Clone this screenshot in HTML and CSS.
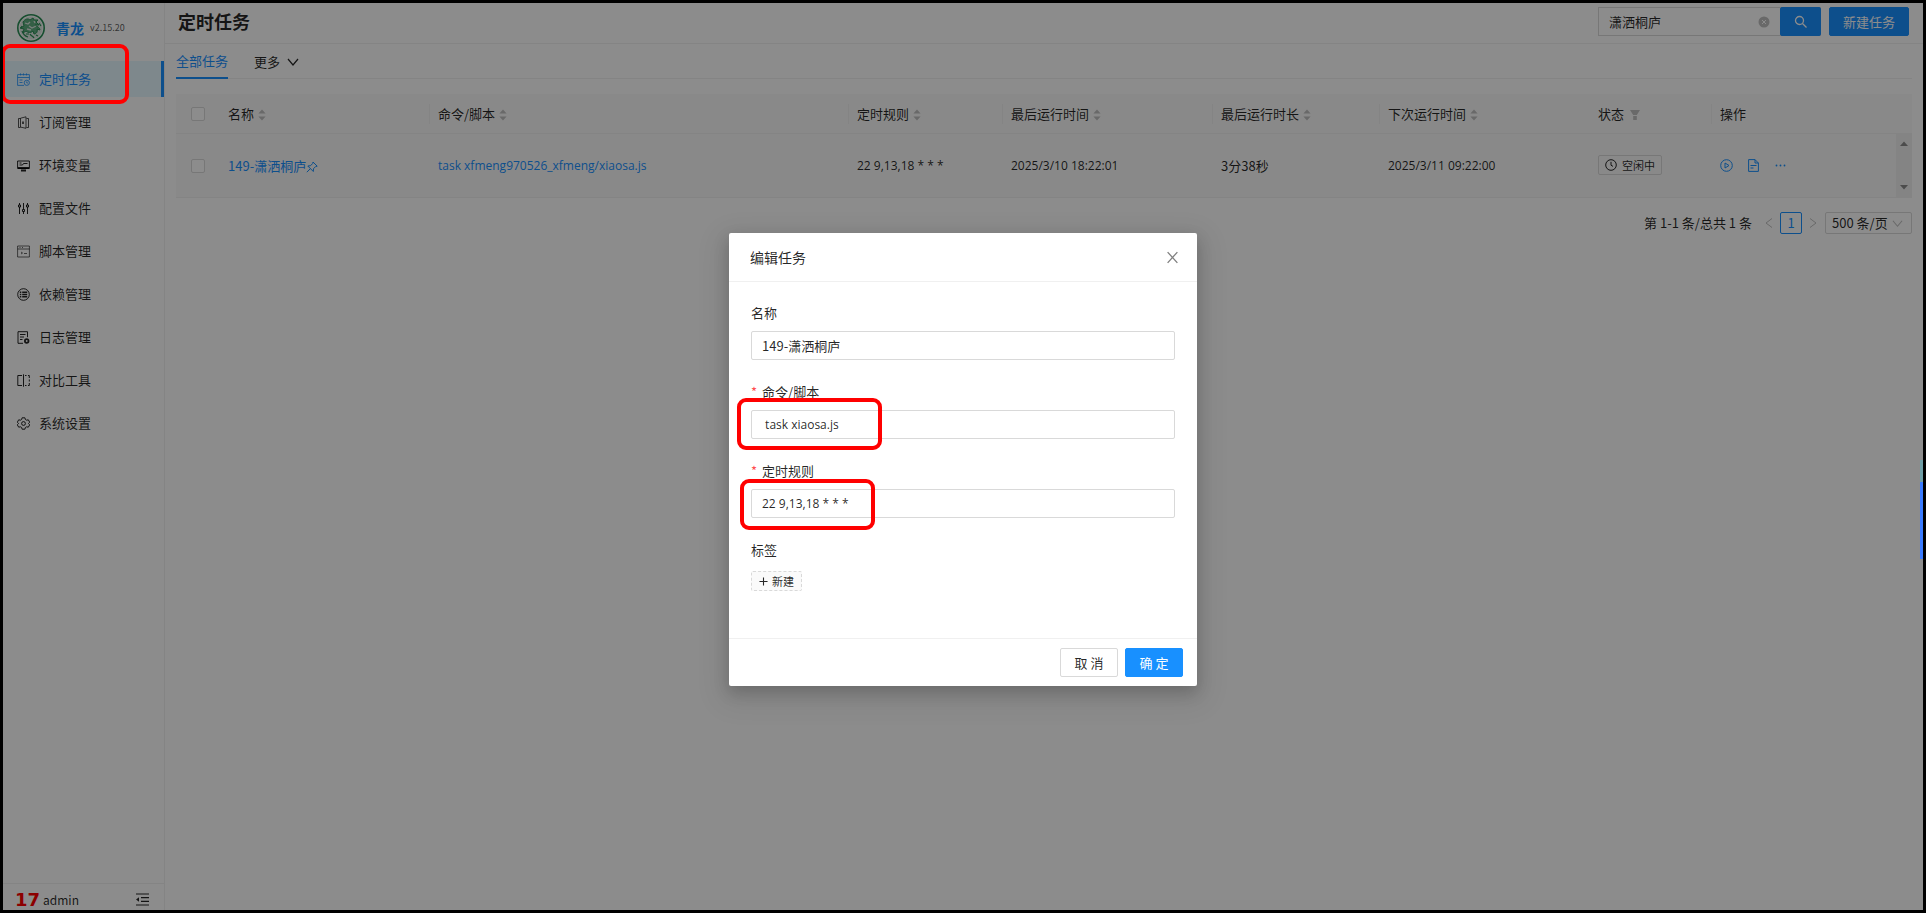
FILE: index.html
```html
<!DOCTYPE html>
<html lang="zh-CN">
<head>
<meta charset="utf-8">
<title>定时任务 - 青龙</title>
<link rel="stylesheet" href="styles.css">
</head>
<body>
<svg class="defs" width="0" height="0" aria-hidden="true">
  <symbol id="sorter" viewBox="0 0 8 14"><path fill="currentColor" d="M4 1.5 7.6 5.5H.4zM4 12.5 .4 8.5h7.2z"/></symbol>
  <symbol id="down" viewBox="0 0 12 12"><path fill="none" stroke="currentColor" stroke-width="1.2" d="M1 3l5 6 5-6"/></symbol>
</svg>
<div class="app">
  <aside class="sider">
    <div class="brand">
      <svg class="logo" viewBox="0 0 28 28" fill="none" stroke="#2b8f57">
        <circle cx="14" cy="14" r="13.2" stroke-width="1.600"/>
        <circle cx="14" cy="14" r="11.500" fill="#dfe9e2" stroke="none"/>
        <path fill="#5fae80" stroke-width="1" d="M6 8c2-3 5-4 7-2l3-2 1 2 4 0-2 2 3 3-4 0c2 2 5 2 5 5l-3-1c1 3-1 5-3 5l-1-3c-2 2-5 2-7 0l-3 2 1-4-4-1 4-2z"/>
        <path stroke="#dfe9e2" stroke-width="1.300" d="M8 9l3 1 2-2M12 12l3 2 4-2M10 15l4 1M17 7l1 2"/>
        <path stroke-width="1.200" d="M5 17c1 3 3 5 6 6M13 20c1 2 3 2 4 4M19 21l2 1M5 12l-1 2M22 9l2 3M9 20l3 0"/>
      </svg>
      <a class="brand-name" href="#">青龙</a>
      <span class="version">v2.15.20</span>
    </div>
    <nav>
      <ul class="menu">
        <li><a class="menu-item active" href="#"><svg viewBox="0 0 13 13" fill="none" stroke="currentColor" stroke-width=".8"><path d="M12.4 7V1.6H.6v10.8H7M.6 4.5h11.8M3.5.4v2M6.5.4v2M9.5.4v2M2.5 7h3M2.5 9.5h3"/><circle cx="9.8" cy="9.8" r="2.6"/><path d="M9.8 8.4v1.6h1"/></svg>定时任务</a></li>
        <li><a class="menu-item" href="#"><svg viewBox="0 0 13 13" fill="none" stroke="currentColor" stroke-width=".8"><path d="M3.500 11.500H1.500v-9h2M3.500 2.200 9 .8v11.500l-5.500-1.200zM9.500 2.500h2v9h-2"/><path stroke-width="1.500" d="M6 5.500v2.500"/></svg>订阅管理</a></li>
        <li><a class="menu-item" href="#"><svg viewBox="0 0 13 13" fill="none" stroke="currentColor"><path d="M.6 2h11.800v7.500H.6zM2.500 6h3l1-1.500h4M2.500 4h2"/><path stroke-width="1.800" d="M1 9h11M4 11.500h5"/></svg>环境变量</a></li>
        <li><a class="menu-item" href="#"><svg viewBox="0 0 13 13" fill="none" stroke="currentColor"><path d="M2.500 1v2M2.500 5v7M6.500 1v6M6.500 9.500v2.500M10.500 1v2M10.500 5v7M1.500 3h2v2h-2zM5.500 7.500h2v2h-2zM9.500 3h2v2h-2z"/></svg>配置文件</a></li>
        <li><a class="menu-item" href="#"><svg viewBox="0 0 13 13" fill="none" stroke="currentColor" stroke-width=".7"><path d="M.6 1h11.800v11H.6zM.6 4h11.800M2.500 2.500h1M5 2.500h1M4 7l1.500 1L4 9M7 8.500h3"/></svg>脚本管理</a></li>
        <li><a class="menu-item" href="#"><svg viewBox="0 0 13 13" fill="none" stroke="currentColor"><circle cx="6.500" cy="6.500" r="5.800"/><path stroke-width="1.500" d="M2.800 4.200h1.500M5.200 4.200h5M2.800 6.500h1.500M5.200 6.500h5M2.800 8.800h1.500M5.200 8.800h5"/></svg>依赖管理</a></li>
        <li><a class="menu-item" href="#"><svg viewBox="0 0 13 13" fill="none" stroke="currentColor"><path d="M6 12.300H1V.7h9.500v5.500M3 3.500h5.500M3 6h4M3 8.500h2.500"/><circle cx="9.700" cy="10" r="1.800" stroke-width="1.800"/></svg>日志管理</a></li>
        <li><a class="menu-item" href="#"><svg viewBox="0 0 13 13" fill="none" stroke="currentColor"><path d="M5 1.500H.8v10H5M6.500.3v12.400M8 1.500h1.500M11 1.500h1.300V4M12.300 5.500v2M12.300 9v2.500H11M9.500 11.500H8"/></svg>对比工具</a></li>
        <li><a class="menu-item" href="#"><svg viewBox="0 0 13 13" fill="none" stroke="currentColor" stroke-linejoin="round"><path d="M5.100.8h2.800l.5 1.700 1.200.7 1.700-.4 1.400 2.400-1.200 1.300 1.200 1.300-1.400 2.400-1.700-.4-1.200.7-.5 1.700H5.100l-.5-1.700-1.200-.7-1.700.4L.3 7.800l1.200-1.300L.3 5.200l1.400-2.400 1.700.4 1.200-.7z"/><circle cx="6.500" cy="6.500" r="1.900"/></svg>系统设置</a></li>
      </ul>
    </nav>
    <div class="sider-foot">
      <span class="badge-num">17</span>
      <span class="user">admin</span>
      <button class="icon-btn fold" aria-label="收起菜单"><svg viewBox="0 0 13 13" fill="none" stroke="currentColor" stroke-width="1.200"><path d="M0 1h13M5 4.700h8M5 8.300h8M0 12h13"/><path fill="currentColor" stroke="none" d="M0 6.500 3 4.200v4.600z"/></svg></button>
    </div>
  </aside>

  <main class="main">
    <header class="page-head">
      <h1>定时任务</h1>
      <div class="search">
        <input type="text" value="潇洒桐庐" aria-label="搜索任务">
        <button class="icon-btn clear" aria-label="清除"><svg viewBox="0 0 12 12"><circle cx="6" cy="6" r="5.500" fill="currentColor"/><path stroke="#fff" d="M4 4l4 4M8 4 4 8"/></svg></button>
        <button class="btn primary search-btn" aria-label="搜索"><svg viewBox="0 0 13 13" fill="none" stroke="currentColor" stroke-width="1.300"><circle cx="5.500" cy="5.500" r="4"/><path d="M8.500 8.500l4 4"/></svg></button>
      </div>
      <button class="btn primary new-btn">新建任务</button>
    </header>

    <div class="content">
      <div class="tabs">
        <a class="tab active" href="#">全部任务</a>
        <button class="tab">更多<svg viewBox="0 0 12 12"><use href="#down"/></svg></button>
      </div>

      <table class="tasks">
        <colgroup><col class="c-check"><col class="c-long"><col><col class="c-rule"><col class="c-long"><col class="c-dur"><col class="c-long"><col class="c-state"><col class="c-ops"><col class="c-bar"></colgroup>
        <thead>
          <tr>
            <th><input type="checkbox" aria-label="全选"></th>
            <th class="split">名称<svg class="sorter"><use href="#sorter"/></svg></th>
            <th class="split">命令/脚本<svg class="sorter"><use href="#sorter"/></svg></th>
            <th class="split">定时规则<svg class="sorter"><use href="#sorter"/></svg></th>
            <th class="split">最后运行时间<svg class="sorter"><use href="#sorter"/></svg></th>
            <th class="split">最后运行时长<svg class="sorter"><use href="#sorter"/></svg></th>
            <th>下次运行时间<svg class="sorter"><use href="#sorter"/></svg></th>
            <th class="split">状态<svg class="filter" viewBox="0 0 10 10"><path fill="currentColor" d="M0 0h10L6.800 5H3.200zM3.200 6h3.600v4H3.200z"/></svg></th>
            <th>操作</th>
            <th></th>
          </tr>
        </thead>
        <tbody>
          <tr>
            <td><input type="checkbox" aria-label="选择 149-潇洒桐庐"></td>
            <td><a href="#">149-潇洒桐庐<svg class="pin" viewBox="0 0 12 12" fill="none" stroke="currentColor"><path d="M7 1l4.200 4.200-1.500.3-2.200 2.200-.2 2.800L1.800 5l2.700-.3L6.700 2.500zM4.200 7.800.8 11.200"/></svg></a></td>
            <td class="latin"><a href="#">task xfmeng970526_xfmeng/xiaosa.js</a></td>
            <td class="latin">22 9,13,18 * * *</td>
            <td class="latin">2025/3/10 18:22:01</td>
            <td>3分38秒</td>
            <td class="latin">2025/3/11 09:22:00</td>
            <td><span class="tag"><svg viewBox="0 0 12 12" fill="none" stroke="currentColor"><circle cx="6" cy="6" r="5.300"/><path d="M6 2.800v3.400l2 1.200"/></svg>空闲中</span></td>
            <td>
              <div class="ops">
                <button class="icon-btn" aria-label="运行"><svg viewBox="0 0 13 13" fill="none" stroke="currentColor"><circle cx="6.500" cy="6.500" r="5.800"/><path d="M5 4l4 2.500L5 9z"/></svg></button>
                <button class="icon-btn" aria-label="日志"><svg viewBox="0 0 13 13" fill="none" stroke="currentColor"><path d="M1.600.6h6.400l3.400 3.400v8.400H1.600zM8 .6V4h3.400M3.500 6.500h6M3.500 9h3"/></svg></button>
                <button class="icon-btn" aria-label="更多操作"><svg viewBox="0 0 13 13" fill="currentColor"><circle cx="2.500" cy="6.500" r=".9"/><circle cx="6.500" cy="6.500" r=".9"/><circle cx="10.500" cy="6.500" r=".9"/></svg></button>
              </div>
            </td>
            <td class="bar-cell"><div class="scrollbar"><svg viewBox="0 0 8 5"><path fill="currentColor" d="M0 5l4-4.500L8 5z"/></svg><svg viewBox="0 0 8 5"><path fill="currentColor" d="M0 0h8L4 4.500z"/></svg></div></td>
          </tr>
        </tbody>
      </table>

      <div class="pager">
        <span class="total">第 1-1 条/总共 1 条</span>
        <button class="icon-btn arrow" aria-label="上一页"><svg viewBox="0 0 12 12" fill="none" stroke="currentColor"><path d="M9 1.500 3 6l6 4.500"/></svg></button>
        <button class="page-no">1</button>
        <button class="icon-btn arrow" aria-label="下一页"><svg viewBox="0 0 12 12" fill="none" stroke="currentColor"><path d="M3 1.500 9 6l-6 4.500"/></svg></button>
        <div class="size">
          <select aria-label="每页条数"><option>500 条/页</option></select>
          <svg viewBox="0 0 12 12"><use href="#down"/></svg>
        </div>
      </div>
    </div>
  </main>

  <div class="mask">
    <form class="modal" role="dialog" aria-labelledby="dlg-title">
      <div class="modal-head">
        <h2 id="dlg-title">编辑任务</h2>
        <button type="button" class="icon-btn close" aria-label="关闭"><svg viewBox="0 0 12 12" fill="none" stroke="currentColor" stroke-width="1.200"><path d="M1.500 1l9 10M10.500 1l-9 10"/></svg></button>
      </div>
      <div class="modal-body">
        <div class="field">
          <label for="f-name">名称</label>
          <input id="f-name" type="text" value="149-潇洒桐庐">
        </div>
        <div class="field marked">
          <label class="required" for="f-cmd">命令/脚本</label>
          <input class="latin" id="f-cmd" type="text" value=" task xiaosa.js">
          <span class="mark mark-cmd"></span>
        </div>
        <div class="field marked">
          <label class="required" for="f-rule">定时规则</label>
          <input class="latin" id="f-rule" type="text" value="22 9,13,18 * * *">
          <span class="mark mark-rule"></span>
        </div>
        <div class="field">
          <span class="label">标签</span>
          <button type="button" class="tag-new"><svg viewBox="0 0 10 10" fill="none" stroke="currentColor" stroke-width="1.200"><path d="M5 .5v9M.5 5h9"/></svg>新建</button>
        </div>
      </div>
      <div class="modal-foot">
        <button type="button" class="btn">取 消</button>
        <button type="button" class="btn primary">确 定</button>
      </div>
    </form>
  </div>
  <span class="mark mark-menu"></span>
  <span class="side-handle"></span>
</div>
</body>
</html>
```
FILE: styles.css
```css
* { box-sizing: border-box; }

body {
  margin: 0;
  padding: 3px;
  background: #000;
  color: rgba(0, 0, 0, .85);
  font: 13px/20px "Noto Sans CJK SC", "Noto Sans", sans-serif;
}

button, input, select { font: inherit; color: inherit; margin: 0; }
button { cursor: pointer; }
a { color: #1890ff; text-decoration: none; }
svg { display: block; flex: none; }
h1, h2, ul { margin: 0; padding: 0; }
.defs { position: absolute; }
.latin { font-family: "Open Sans", "Noto Sans", sans-serif; font-size: 12px; }

.app {
  position: relative;
  display: flex;
  height: calc(100vh - 6px);
  background: #fff;
  overflow: hidden;
}

/* sidebar */
.sider {
  width: 162px;
  flex: none;
  display: flex;
  flex-direction: column;
  border-right: 1px solid #f0f0f0;
}
.brand { display: flex; align-items: center; height: 50px; padding-left: 14px; }
.logo { width: 28px; height: 28px; }
.brand-name { margin-left: 11px; margin-right: 6px; font-size: 14px; font-weight: 700; }
.version { font-size: 9px; color: rgba(0, 0, 0, .65); }
.menu { list-style: none; padding-top: 8px; display: grid; gap: 7px; }
.menu-item {
  display: flex;
  align-items: center;
  gap: 9px;
  height: 36px;
  padding-left: 14px;
  color: inherit;
}
.menu-item svg { width: 13px; height: 13px; }
.menu-item.active { color: #1890ff; background: #e6f7ff; border-right: 3px solid #1890ff; }
.sider-foot {
  display: flex;
  align-items: center;
  margin-top: auto;
  padding: 5px 15px 0 12px;
  border-top: 1px solid #f0f0f0;
}
.badge-num { font: 700 18px/21px "DejaVu Sans", sans-serif; color: #f00; }
.user { margin-left: 3px; font-size: 12px; }
.fold { margin-left: auto; }

.icon-btn { display: flex; padding: 0; border: 0; background: none; }
.icon-btn svg { width: 13px; height: 13px; }

/* header */
.main { flex: 1; min-width: 0; }
.page-head {
  display: flex;
  align-items: center;
  height: 41px;
  padding: 0 14px 3px 13px;
  border-bottom: 1px solid #f0f0f0;
}
.page-head h1 { font-size: 18px; line-height: 24px; margin-right: auto; padding-bottom: 2px; }
.search { display: flex; align-items: center; width: 223px; height: 29px; margin-right: 8px; border: 1px solid #d9d9d9; border-right: 0; }
.search input { flex: 1; min-width: 0; padding: 0 10px; border: 0; background: none; outline: 0; }
.clear { margin-right: 10px; color: #bfbfbf; }
.clear svg { width: 12px; height: 12px; }
.btn {
  height: 29px;
  padding: 0 13px;
  border: 1px solid #d9d9d9;
  border-radius: 2px;
  background: #fff;
}
.btn.primary { background: #1890ff; border-color: #1890ff; color: #fff; }
.search-btn svg { width: 13px; height: 13px; }

/* content */
.content { padding: 0 11px; }
.tabs { display: flex; gap: 26px; height: 35px; margin-bottom: 15px; border-bottom: 1px solid #f0f0f0; }
.tab { display: flex; align-items: center; gap: 7px; height: 35px; padding: 0; border: 0; background: none; color: inherit; }
.tab.active { color: #1890ff; border-bottom: 2px solid #1890ff; }
.tab svg { width: 12px; height: 12px; }

.tasks { width: 100%; table-layout: fixed; border-collapse: separate; border-spacing: 0; background: #fafafa; }
.c-check { width: 44px; }
.c-long { width: 210px; }
.c-rule { width: 154px; }
.c-dur { width: 167px; }
.c-state { width: 122px; }
.c-ops { width: 184px; }
.c-bar { width: 16px; }
.tasks th, .tasks td { padding: 0 8px; text-align: left; font-weight: 400; border-bottom: 1px solid #f0f0f0; white-space: nowrap; }
.tasks th { height: 40px; }
.tasks td { height: 64px; }
.tasks th:first-child, .tasks td:first-child { padding-left: 15px; }
.split { background: linear-gradient(#f0f0f0, #f0f0f0) right center / 1px 20px no-repeat; }
.tasks svg { display: inline-block; vertical-align: middle; }
.tasks input {
  appearance: none;
  display: block;
  width: 14px;
  height: 14px;
  border: 1px solid #d9d9d9;
  border-radius: 2px;
  background: #fff;
}
.sorter { width: 8px; height: 14px; margin-left: 4px; color: #bfbfbf; }
.filter { width: 10px; height: 10px; margin-left: 6px; color: #bfbfbf; }
.pin { width: 12px; height: 12px; }
.tag {
  display: inline-flex;
  align-items: center;
  gap: 5px;
  height: 20px;
  padding: 0 6px;
  border: 1px solid #d9d9d9;
  border-radius: 2px;
  font-size: 11px;
}
.tag svg { width: 12px; height: 12px; }
.ops { display: flex; gap: 14px; color: #1890ff; }
.tasks .bar-cell { padding: 0; }
.scrollbar {
  display: flex;
  flex-direction: column;
  align-items: center;
  justify-content: space-between;
  height: 63px;
  padding: 7px 0;
  background: #f1f1f1;
  color: #8a8a8a;
}
.scrollbar svg { width: 8px; height: 5px; }

.pager { display: flex; justify-content: flex-end; align-items: center; margin-top: 14px; }
.total { margin-right: 11px; }
.arrow { color: #bfbfbf; }
.arrow svg { width: 12px; height: 12px; }
.page-no { width: 22px; height: 22px; margin: 0 5px; padding: 0; border: 1px solid #1890ff; border-radius: 2px; background: #fff; color: #1890ff; line-height: 20px; }
.size { display: flex; align-items: center; height: 22px; width: 87px; margin-left: 6px; padding: 0 8px 0 6px; border: 1px solid #d9d9d9; border-radius: 2px; }
.size select { appearance: none; flex: 1; min-width: 0; padding: 0; border: 0; background: none; }
.size svg { width: 11px; height: 11px; color: #bfbfbf; }

/* dialog */
.mask {
  position: absolute;
  inset: 0;
  display: flex;
  justify-content: center;
  align-items: flex-start;
  padding-top: 230px;
  background: rgba(0, 0, 0, .45);
}
.modal { width: 468px; background: #fff; border-radius: 2px; box-shadow: 0 6px 16px rgba(0, 0, 0, .18), 0 9px 28px 8px rgba(0, 0, 0, .08); }
.modal-head { display: flex; align-items: center; justify-content: space-between; height: 49px; padding: 0 18px 0 21px; border-bottom: 1px solid #f0f0f0; }
.modal-head h2 { font-size: 14px; font-weight: 400; }
.close { color: rgba(0, 0, 0, .5); }
.modal-body { display: grid; gap: 22px; padding: 21px 22px 47px; }
.field { display: flex; flex-direction: column; align-items: flex-start; gap: 8px; }
.required::before { content: "*"; margin-right: 5px; color: #ff4d4f; }
.field input { width: 100%; height: 29px; padding: 0 10px; border: 1px solid #d9d9d9; border-radius: 2px; background: #fff; outline: 0; }
.tag-new {
  display: flex;
  align-items: center;
  gap: 4px;
  height: 20px;
  margin-top: 3px;
  padding: 0 7px;
  border: 1px dashed #d9d9d9;
  border-radius: 2px;
  background: #fafafa;
  font-size: 11px;
}
.tag-new svg { width: 9px; height: 9px; }
.modal-foot { display: flex; justify-content: flex-end; gap: 7px; padding: 9px 14px; border-top: 1px solid #f0f0f0; }
.modal-foot .btn { width: 58px; padding: 0; }

/* annotations over the page */
.marked { position: relative; }
.mark { position: absolute; border: 4px solid #f00; border-radius: 9px; pointer-events: none; }
.mark-menu { left: -2px; top: 41px; width: 128px; height: 60px; }
.mark-cmd { left: -14px; top: 16px; width: 145px; height: 52px; }
.mark-rule { left: -11px; top: 18px; width: 135px; height: 51px; }
.side-handle { position: absolute; right: 0; top: 457px; width: 3px; height: 99px; background: linear-gradient(#6f9ea6 22px, #3a7bff 22px); }
```
